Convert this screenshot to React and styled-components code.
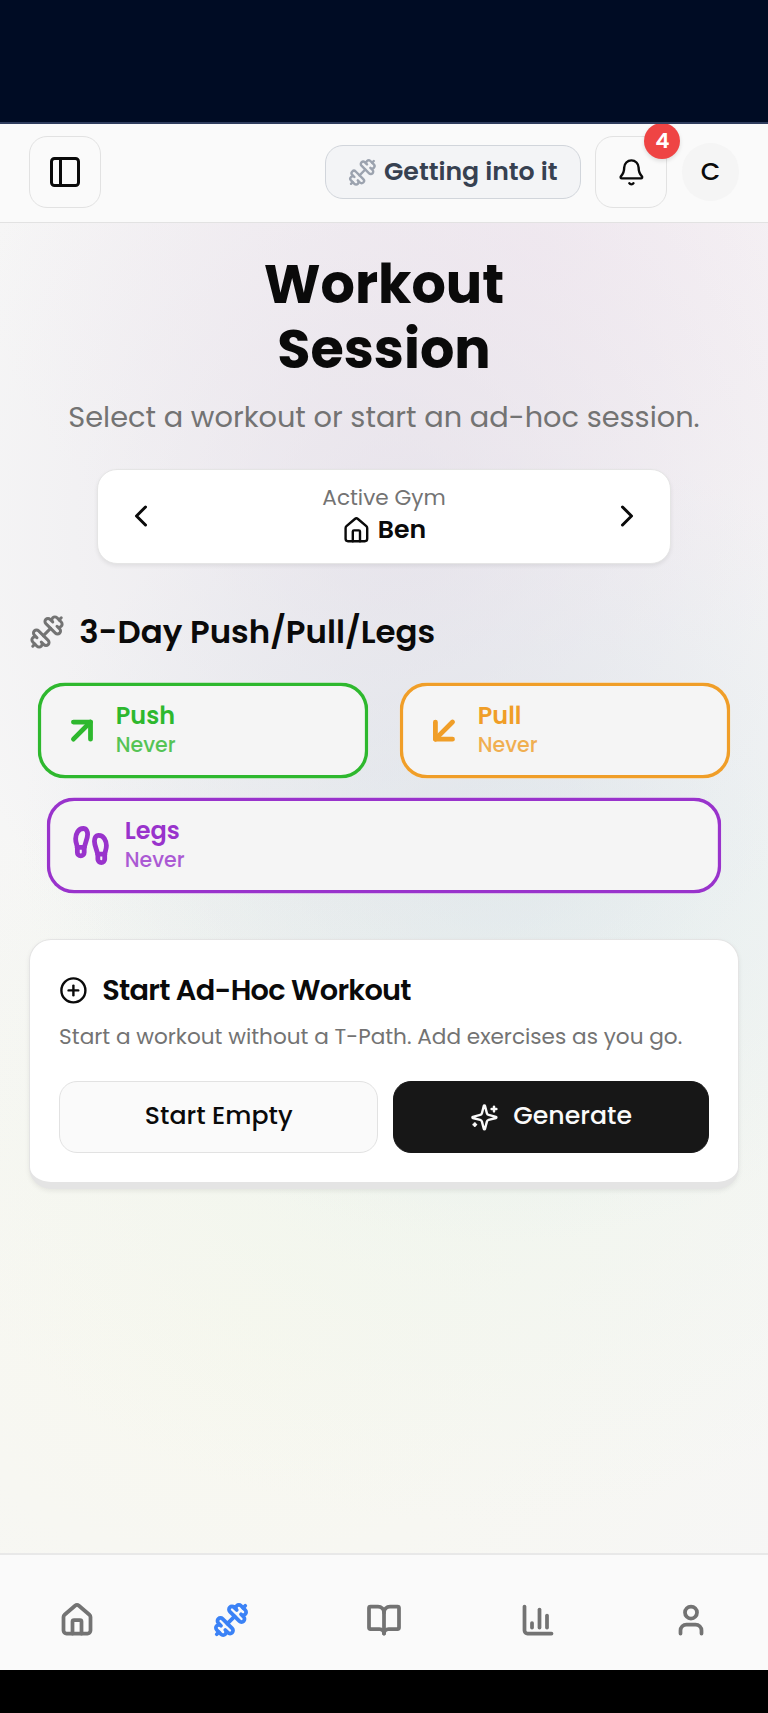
import React from "react";
import styled, { createGlobalStyle, css } from "styled-components";
import {
  ArrowDownLeft,
  ArrowUpRight,
  Bell,
  BookOpen,
  ChartColumn,
  ChevronLeft,
  ChevronRight,
  CirclePlus,
  Dumbbell,
  Footprints,
  House,
  PanelLeft,
  User,
} from "lucide-react";

const Global = createGlobalStyle`
  *, *::before, *::after { box-sizing: border-box; }
  body {
    margin: 0;
    background: #000;
    color: #0a0a0a;
    font-family: Poppins, Inter, "Liberation Sans", sans-serif;
    -webkit-font-smoothing: antialiased;
  }
  button { font: inherit; color: inherit; padding: 0; }
  svg { display: block; flex: none; }
`;

const Screen = styled.div`
  display: flex;
  flex-direction: column;
  width: 768px;
  height: 1713px;
  overflow: hidden;
  background: #000;
`;

const StatusArea = styled.div`
  flex: none;
  height: 124px;
  background: #000c24;
  border-bottom: 2px solid #2f3d5e;
`;

const Header = styled.header`
  flex: none;
  display: flex;
  align-items: center;
  justify-content: space-between;
  height: 99px;
  padding: 0 28.8px 1.6px;
  background: #fafafa;
  border-bottom: 1px solid #e2e2e2;
`;

const HeaderGroup = styled.div`
  display: flex;
  align-items: center;
  gap: 14.4px;
`;

const IconButton = styled.button`
  position: relative;
  display: flex;
  align-items: center;
  justify-content: center;
  width: 72px;
  height: 72px;
  background: #fafafa;
  border: 1px solid #e2e2e2;
  border-radius: 18px;
`;

const Badge = styled.span`
  position: absolute;
  top: -14.4px;
  right: -14.2px;
  width: 36px;
  height: 36px;
  border-radius: 50%;
  background: #ef4444;
  color: #fff;
  font-size: 21.6px;
  font-weight: 600;
  line-height: 35px;
  text-align: center;
  box-shadow: 0 2px 4px rgba(0, 0, 0, 0.12);
  clip-path: inset(1.2px -10px -10px -10px);
`;

const StatusPill = styled.div`
  display: flex;
  align-items: center;
  gap: 7.2px;
  width: 256px;
  height: 54px;
  padding-left: 22.2px;
  background: #f3f4f6;
  border: 1px solid #d1d5db;
  border-radius: 18px;
  color: #9ca3af;
`;

const PillLabel = styled.span`
  padding-bottom: 1px;
  color: #374151;
  font-size: 25.2px;
  font-weight: 600;
  line-height: 36px;
  white-space: nowrap;
`;

const Avatar = styled.div`
  width: 57.6px;
  height: 57.6px;
  border-radius: 50%;
  background: #f5f5f5;
  font-size: 25.2px;
  font-weight: 500;
  line-height: 57px;
  text-align: center;
`;

const Main = styled.main`
  flex: 1;
  min-height: 0;
  padding: 28.8px 28.8px 0;
  background:
    radial-gradient(ellipse 470px 560px at 400px 300px, rgba(224, 219, 230, 0.6), rgba(224, 219, 230, 0.3) 50%, rgba(224, 219, 230, 0) 100%),
    radial-gradient(ellipse 560px 420px at 540px 20px, rgba(242, 229, 239, 0.6), rgba(242, 229, 239, 0) 100%),
    radial-gradient(ellipse 480px 400px at 500px 620px, rgba(218, 231, 235, 0.66), rgba(218, 231, 235, 0) 100%),
    radial-gradient(ellipse 560px 420px at 460px 880px, rgba(236, 244, 235, 0.65), rgba(236, 244, 235, 0) 100%),
    radial-gradient(ellipse 660px 560px at 240px 1100px, rgba(248, 248, 238, 0.9), rgba(248, 248, 238, 0) 100%),
    #f6f6f6;
`;

const Title = styled.h1`
  display: flex;
  flex-direction: column;
  align-items: center;
  margin: 0;
  font-size: 54px;
  font-weight: 700;
  line-height: 64.8px;
`;

const Subtitle = styled.p`
  margin: 14.4px 0 29.8px;
  color: #737373;
  font-size: 28.8px;
  line-height: 43.2px;
  text-align: center;
  white-space: nowrap;
`;

const GymCard = styled.section`
  display: flex;
  align-items: center;
  justify-content: space-between;
  width: 574px;
  height: 95px;
  margin: 0 auto;
  padding: 0 25.2px;
  background: #fff;
  border: 1px solid #e5e5e5;
  border-radius: 20px;
  box-shadow: 0 2px 4px rgba(0, 0, 0, 0.07);
`;

const GymInfo = styled.div`
  display: flex;
  flex-direction: column;
  align-items: center;
  padding-bottom: 2px;
`;

const GymCaption = styled.span`
  color: #737373;
  font-size: 21.6px;
  line-height: 28.8px;
`;

const GymName = styled.div`
  display: flex;
  align-items: center;
  gap: 7.2px;
  height: 34.2px;
  padding-top: 2px;
  font-size: 25.2px;
  font-weight: 600;
  line-height: 30px;

  span { padding-bottom: 1.5px; }
`;

const SectionHeading = styled.h2`
  display: flex;
  align-items: center;
  gap: 14.4px;
  height: 37px;
  margin: 50.2px 0 28.6px;
  font-size: 32.4px;
  font-weight: 600;
  line-height: 37px;

  svg { color: #737373; }
  span { padding-bottom: 2px; }
`;

const WorkoutGrid = styled.div`
  display: grid;
  grid-template-columns: 1fr 1fr;
  gap: 14.4px;
  margin-bottom: 43.4px;
`;

const WorkoutCard = styled.button`
  grid-column: span ${(p) => p.$span};
  display: flex;
  align-items: center;
  gap: 14.4px;
  height: 100.8px;
  padding-left: 24.6px;
  background: #f5f5f5;
  border: 0;
  border-radius: 28.8px;
  box-shadow: inset 0 0 0 3.6px ${(p) => p.$color};
  color: ${(p) => p.$color};
  text-align: left;
  transform: scale(0.95);
`;

const WorkoutText = styled.span`
  display: flex;
  flex-direction: column;
`;

const WorkoutName = styled.span`
  font-size: 25.2px;
  font-weight: 600;
  line-height: 31px;
`;

const WorkoutMeta = styled.span`
  font-size: 21.6px;
  font-weight: 500;
  line-height: 30px;
  opacity: 0.8;
`;

const AdHocCard = styled.section`
  height: 250px;
  padding: 32px 28.8px 0 29.3px;
  background: #fff;
  border: 1px solid #e4e4e4;
  border-bottom: 7px solid #e4e4e4;
  border-radius: 22px;
  box-shadow: 0 2px 5px rgba(0, 0, 0, 0.07);
`;

const AdHocTitle = styled.h3`
  display: flex;
  align-items: center;
  gap: 14.4px;
  height: 37px;
  margin: 0;
  font-size: 28.8px;
  font-weight: 600;
  line-height: 34px;
  letter-spacing: -0.025em;

  span { padding-bottom: 0.5px; }
`;

const AdHocText = styled.p`
  margin: 10.3px 0 25.7px;
  color: #737373;
  font-size: 21.6px;
  line-height: 36px;
  white-space: nowrap;
`;

const Actions = styled.div`
  display: grid;
  grid-template-columns: 319fr 316.5fr;
  gap: 14.4px;
`;

const ActionButton = styled.button`
  display: flex;
  align-items: center;
  justify-content: center;
  gap: 14.4px;
  height: 72px;
  border-radius: 18px;
  font-size: 25.2px;
  font-weight: 500;
  line-height: 36px;
  background: #fafafa;
  border: 1px solid #e2e2e2;
  ${(p) =>
    p.$primary &&
    css`
      background: #171717;
      border-color: #171717;
      color: #fafafa;
    `}

  span { padding-bottom: 2px; }
`;

const BottomNav = styled.nav`
  flex: none;
  display: grid;
  grid-template-columns: repeat(5, 1fr);
  height: 117px;
  margin-bottom: 43px;
  padding-top: 15.5px;
  background: #fafafa;
  border-top: 2px solid #e8e8e8;
`;

const NavItem = styled.a`
  display: flex;
  align-items: center;
  justify-content: center;
  padding-left: 0.6px;
  color: ${(p) => (p.$active ? "#3b82f6" : "#737373")};
`;

const Sparkles = ({ size }) => (
  <svg width={size} height={size} viewBox="0 0 24 24" fill="none" stroke="currentColor" strokeWidth="2" strokeLinecap="round" strokeLinejoin="round">
    <path d="M9.937 15.5A2 2 0 0 0 8.5 14.063l-6.135-1.582a.5.5 0 0 1 0-.962L8.5 9.936A2 2 0 0 0 9.937 8.5l1.582-6.135a.5.5 0 0 1 .963 0L14.063 8.5A2 2 0 0 0 15.5 9.937l6.135 1.581a.5.5 0 0 1 0 .964L15.5 14.063a2 2 0 0 0-1.437 1.437l-1.582 6.135a.5.5 0 0 1-.963 0z" />
    <path d="M20 3v4" />
    <path d="M22 5h-4" />
    <path d="M4 17v2" />
    <path d="M5 18H3" />
  </svg>
);

const workouts = [
  { name: "Push", color: "#2eb82e", icon: ArrowUpRight, span: 1 },
  { name: "Pull", color: "#f09e28", icon: ArrowDownLeft, span: 1 },
  { name: "Legs", color: "#9933cc", icon: Footprints, span: 2 },
];

const navItems = [
  { label: "Home", icon: House },
  { label: "Workout", icon: Dumbbell, active: true },
  { label: "Library", icon: BookOpen },
  { label: "Progress", icon: ChartColumn },
  { label: "Profile", icon: User },
];

export default function App() {
  return (
    <Screen>
      <Global />
      <StatusArea />
      <Header>
        <IconButton aria-label="Toggle sidebar">
          <PanelLeft size={36} />
        </IconButton>
        <HeaderGroup>
          <StatusPill>
            <Dumbbell size={28.8} />
            <PillLabel>Getting into it</PillLabel>
          </StatusPill>
          <IconButton aria-label="Notifications">
            <Bell size={28.8} />
            <Badge>4</Badge>
          </IconButton>
          <Avatar>C</Avatar>
        </HeaderGroup>
      </Header>
      <Main>
        <Title>
          <span>Workout</span>
          <span>Session</span>
        </Title>
        <Subtitle>Select a workout or start an ad-hoc session.</Subtitle>
        <GymCard>
          <ChevronLeft size={36} />
          <GymInfo>
            <GymCaption>Active Gym</GymCaption>
            <GymName>
              <House size={28.8} />
              <span>Ben</span>
            </GymName>
          </GymInfo>
          <ChevronRight size={36} />
        </GymCard>
        <SectionHeading>
          <Dumbbell size={36} />
          <span>3-Day Push/Pull/Legs</span>
        </SectionHeading>
        <WorkoutGrid>
          {workouts.map(({ name, color, icon: Icon, span }) => (
            <WorkoutCard key={name} $color={color} $span={span}>
              <Icon size={43.2} strokeWidth={2.8} />
              <WorkoutText>
                <WorkoutName>{name}</WorkoutName>
                <WorkoutMeta>Never</WorkoutMeta>
              </WorkoutText>
            </WorkoutCard>
          ))}
        </WorkoutGrid>
        <AdHocCard>
          <AdHocTitle>
            <CirclePlus size={28.8} />
            <span>Start Ad-Hoc Workout</span>
          </AdHocTitle>
          <AdHocText>Start a workout without a T-Path. Add exercises as you go.</AdHocText>
          <Actions>
            <ActionButton>
              <span>Start Empty</span>
            </ActionButton>
            <ActionButton $primary>
              <Sparkles size={28.8} />
              <span>Generate</span>
            </ActionButton>
          </Actions>
        </AdHocCard>
      </Main>
      <BottomNav>
        {navItems.map(({ label, icon: Icon, active }) => (
          <NavItem key={label} $active={active} aria-label={label}>
            <Icon size={36} strokeWidth={2.5} />
          </NavItem>
        ))}
      </BottomNav>
    </Screen>
  );
}
